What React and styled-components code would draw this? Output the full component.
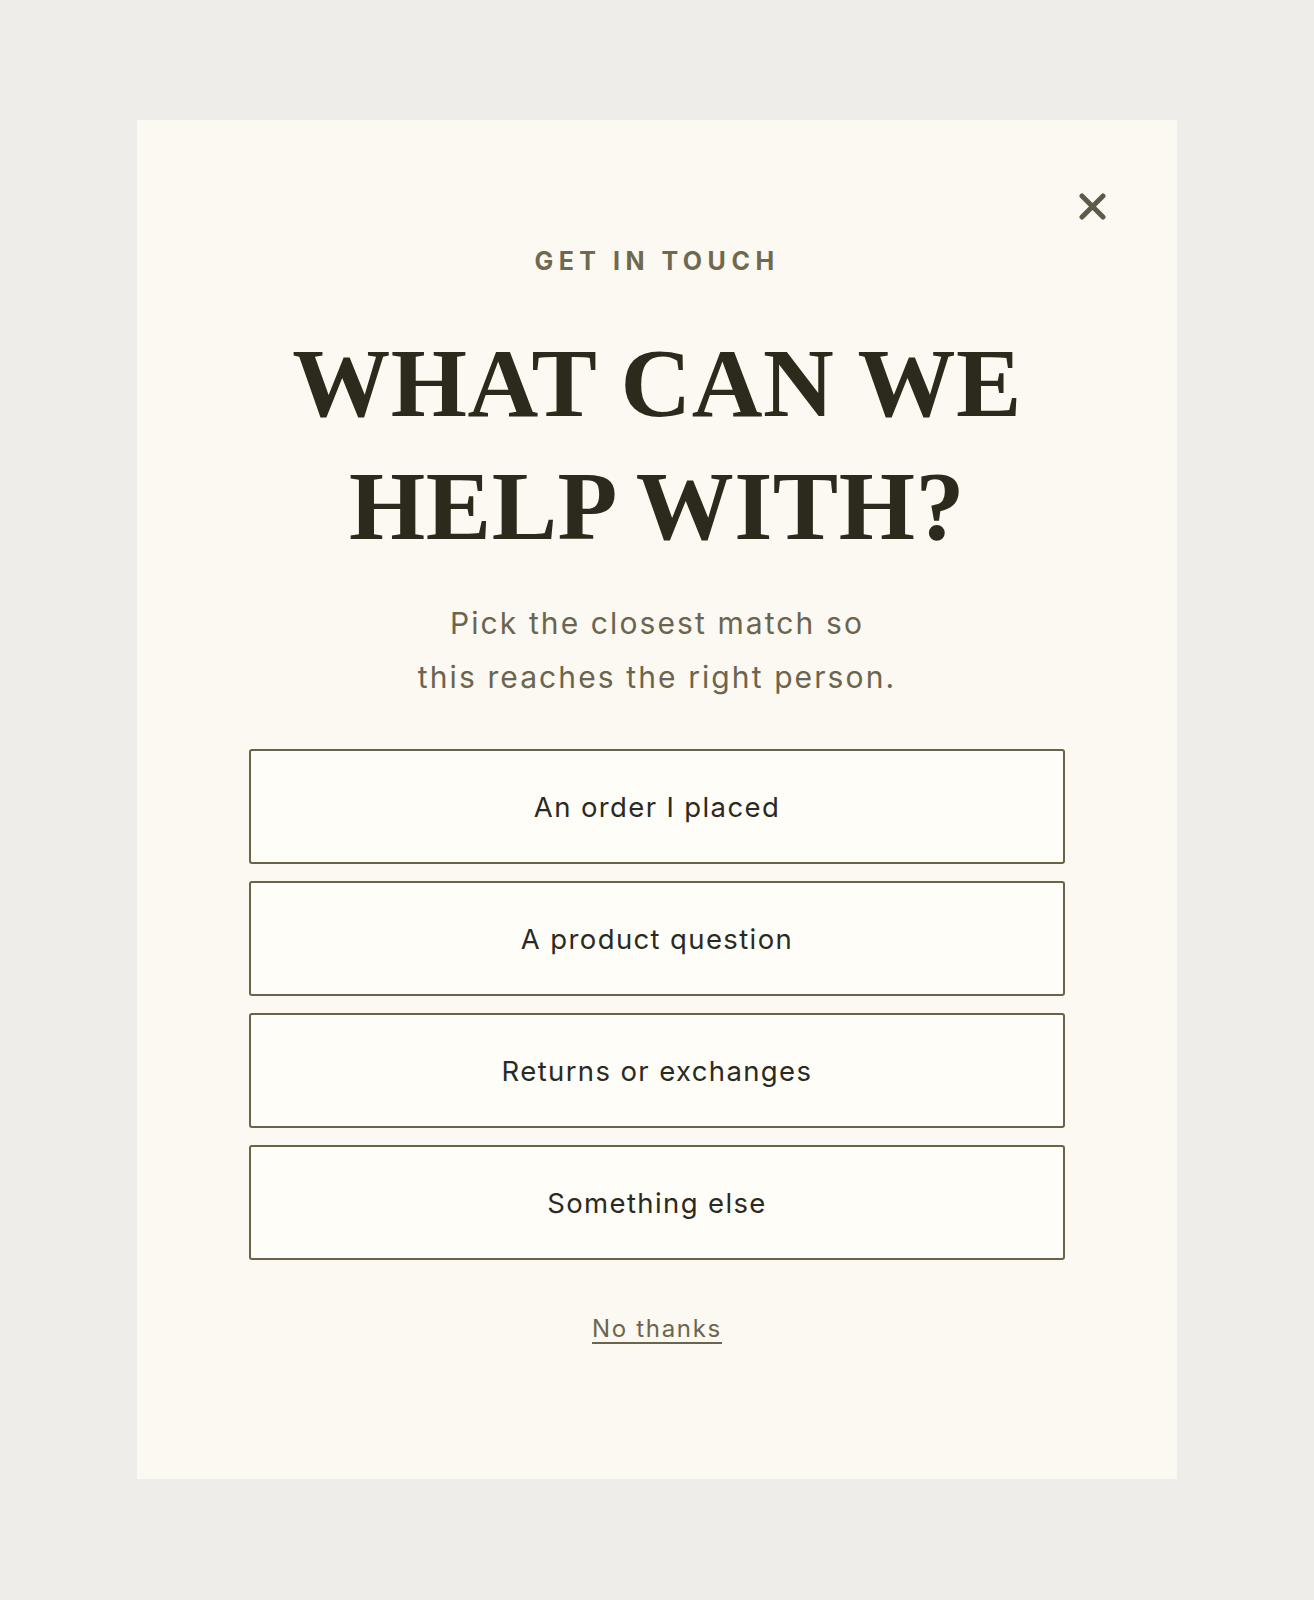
import React from "react";
import styled, { createGlobalStyle } from "styled-components";

const Global = createGlobalStyle`
  html, body { margin: 0; padding: 0; background: #eeede9; }
  body { font-family: Inter, "Open Sans", sans-serif; }
  * { box-sizing: border-box; }
`;

const Page = styled.div`
  min-height: 1600px;
  padding-top: 120px;
  display: flex;
  justify-content: center;
  align-items: flex-start;
`;

const Card = styled.section`
  position: relative;
  width: 1040px;
  background: #fbf9f1;
  padding: 126px 112px 135px;
  display: flex;
  flex-direction: column;
  align-items: center;
`;

const CloseButton = styled.button`
  position: absolute;
  top: 73px;
  right: 71px;
  width: 27px;
  height: 27px;
  padding: 0;
  border: none;
  background: transparent;
  cursor: pointer;
  color: #5d5a4a;
  display: flex;
  svg { display: block; }
`;

const Eyebrow = styled.div`
  font-family: Inter, sans-serif;
  font-weight: 700;
  font-size: 25px;
  line-height: 30px;
  letter-spacing: 0.22em;
  color: #6f694f;
  text-transform: uppercase;
`;

const Heading = styled.h1`
  margin: 46px 0 0;
  font-family: "Liberation Serif", "Times New Roman", serif;
  font-weight: 700;
  font-size: 98px;
  line-height: 123px;
  letter-spacing: 0.005em;
  color: #2b2a1c;
  text-align: center;
`;

const Subtitle = styled.p`
  margin: 28px 0 0;
  font-family: Inter, sans-serif;
  font-size: 30px;
  line-height: 54px;
  letter-spacing: 0.07em;
  color: #6b6550;
  text-align: center;
`;

const Options = styled.div`
  margin-top: 45px;
  width: 816px;
  display: flex;
  flex-direction: column;
  gap: 17px;
`;

const Option = styled.button`
  height: 115px;
  width: 100%;
  background: #fffdf7;
  border: 2px solid #6a634c;
  border-radius: 3px;
  font-family: Inter, sans-serif;
  font-size: 27.5px;
  letter-spacing: 0.05em;
  color: #2b2a22;
  cursor: pointer;
  display: flex;
  align-items: center;
  justify-content: center;
`;

const Dismiss = styled.a`
  margin-top: 54px;
  font-family: Inter, sans-serif;
  font-size: 24px;
  line-height: 30px;
  letter-spacing: 0.07em;
  color: #6b6550;
  text-decoration: underline;
  text-decoration-thickness: 1.5px;
  text-underline-offset: 5px;
  cursor: pointer;
`;

const options = [
  "An order I placed",
  "A product question",
  "Returns or exchanges",
  "Something else",
];

export default function App() {
  return (
    <>
      <Global />
      <Page>
        <Card>
          <CloseButton aria-label="Close">
            <svg width="27" height="27" viewBox="0 0 27 27">
              <path
                d="M3 3 L24 24 M24 3 L3 24"
                stroke="currentColor"
                strokeWidth="5"
                strokeLinecap="round"
                fill="none"
              />
            </svg>
          </CloseButton>
          <Eyebrow>Get in touch</Eyebrow>
          <Heading>
            WHAT CAN WE
            <br />
            HELP WITH?
          </Heading>
          <Subtitle>
            Pick the closest match so
            <br />
            this reaches the right person.
          </Subtitle>
          <Options>
            {options.map((o) => (
              <Option key={o}>{o}</Option>
            ))}
          </Options>
          <Dismiss>No thanks</Dismiss>
        </Card>
      </Page>
    </>
  );
}
